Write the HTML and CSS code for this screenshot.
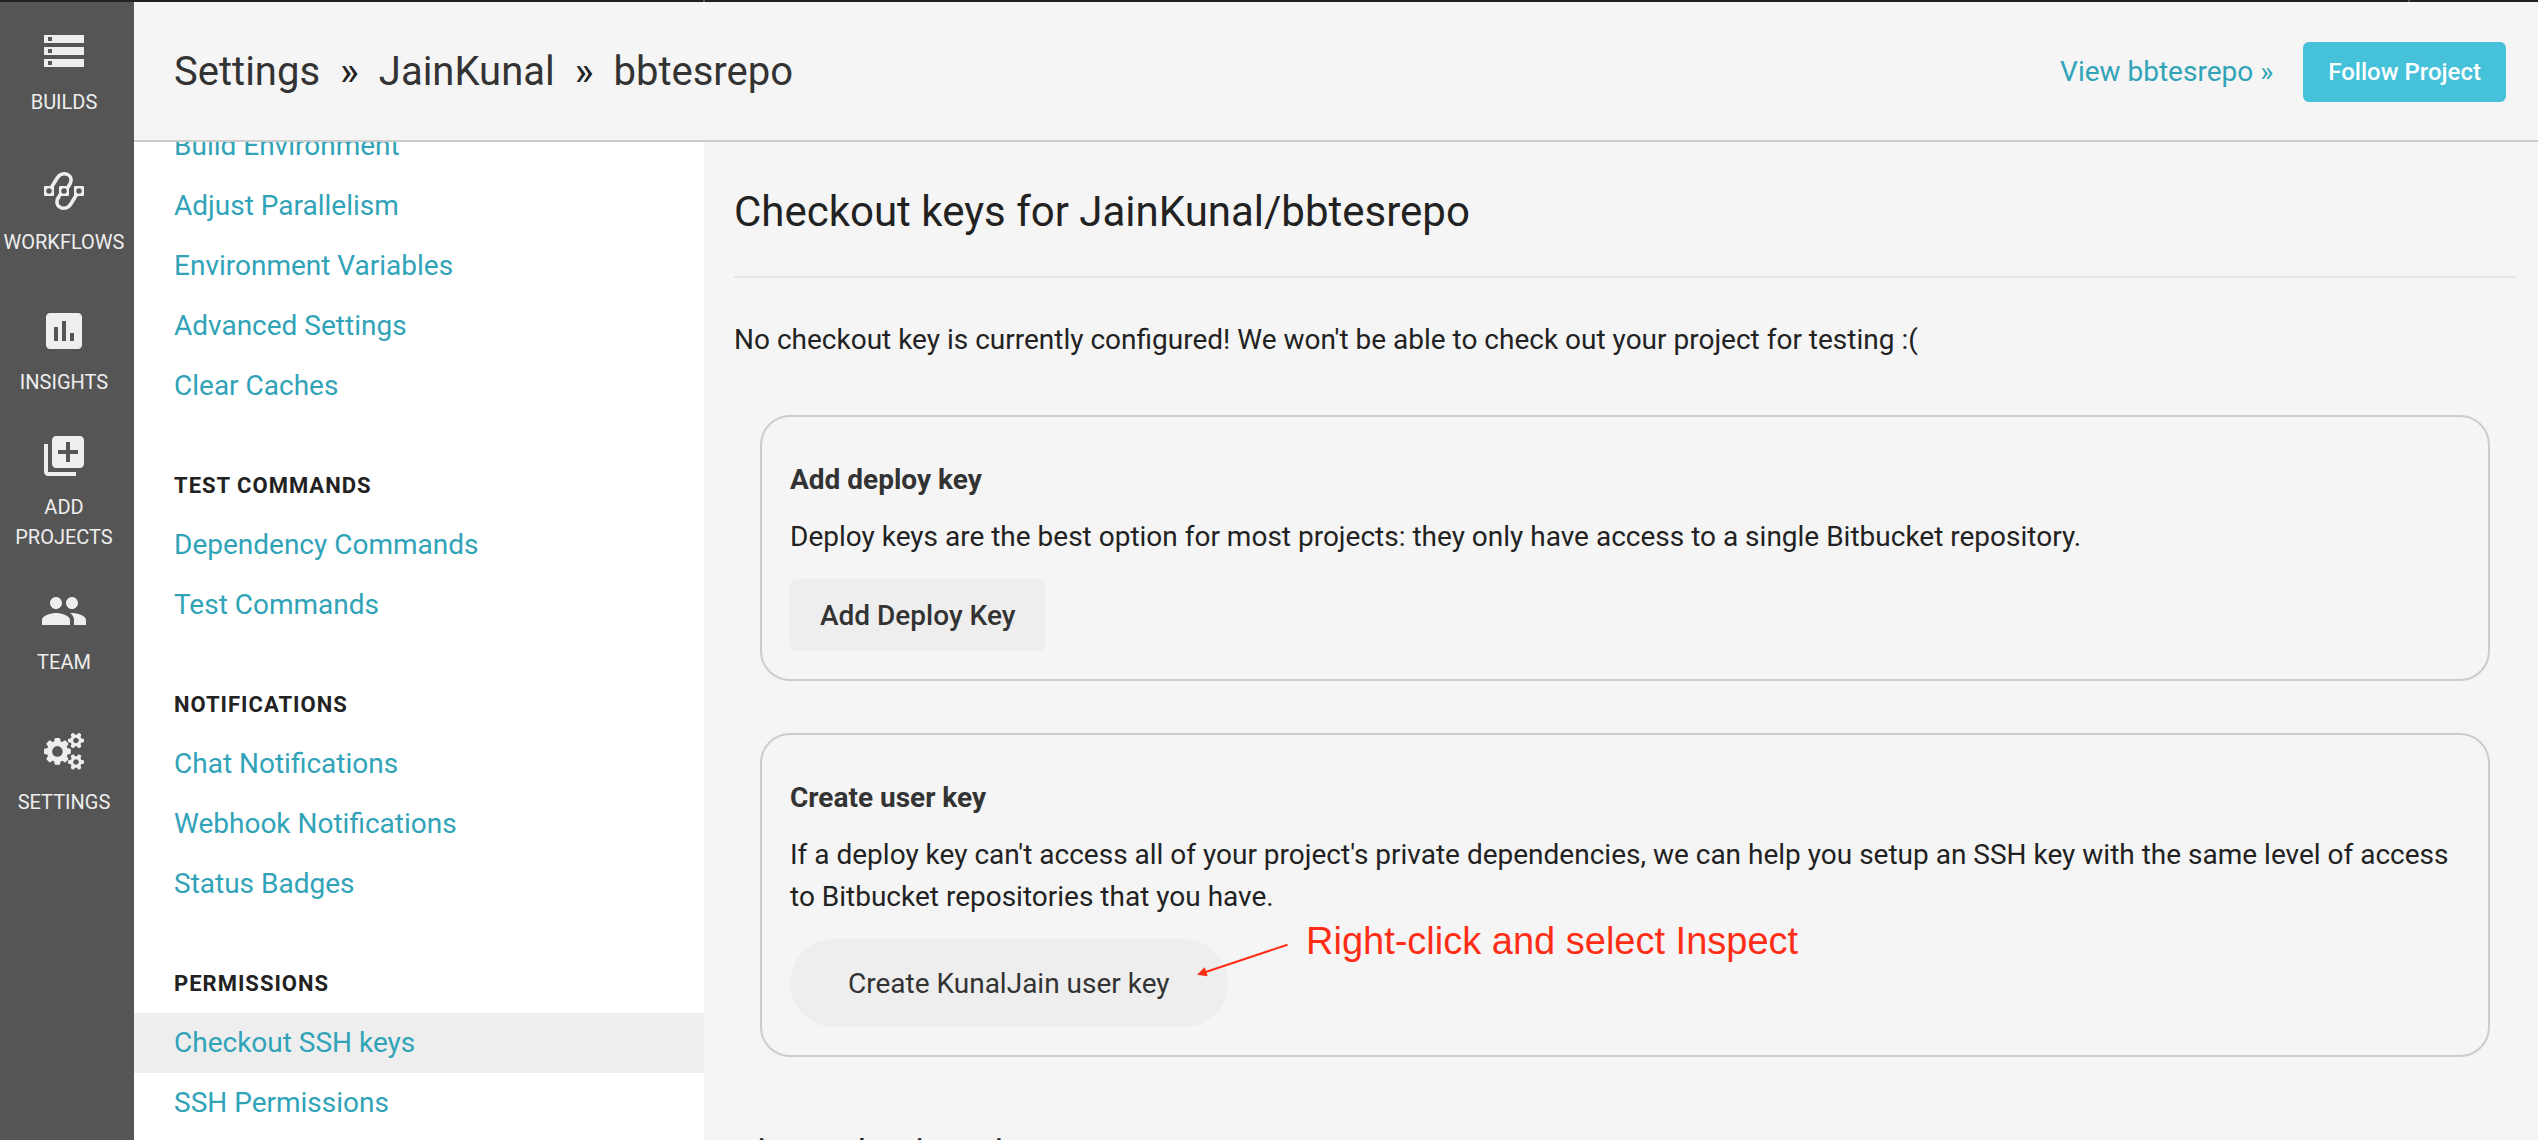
FILE: index.html
```html
<!DOCTYPE html>
<html lang="en">
<head>
<meta charset="utf-8">
<title>Settings » JainKunal » bbtesrepo</title>
<link rel="stylesheet" href="styles.css">
</head>
<body>
<div class="top-strip"></div>
<div class="app">
  <nav class="rail" aria-label="Main">
    <a class="rail-item" href="#builds">
      <svg class="rail-icon" viewBox="0 0 24 24"><path d="M2 20h20v-4H2v4zm2-3h2v2H4v-2zM2 4v4h20V4H2zm4 3H4V5h2v2zm-4 7h20v-4H2v4zm2-3h2v2H4v-2z"/></svg>
      <span>BUILDS</span>
    </a>
    <a class="rail-item" href="#workflows">
      <svg class="rail-icon" viewBox="0 0 48 48">
        <g fill="none" stroke="#eee" stroke-width="3.600">
          <path d="M11 21 L17.500 10.500 C22 3.500 33 7 30.800 15 C30.300 17.500 28.500 18 28 21"/>
          <path d="M37 27 L30.500 37.500 C26 44.500 15 41 17.200 33 C17.700 30.500 19.500 30 20 27"/>
        </g>
        <path fill-rule="evenodd" d="M5 19h8q1 0 1 1v8q0 1-1 1H5q-1 0-1-1v-8q0-1 1-1zM9 21.300a2.700 2.700 0 1 0 0 5.400a2.700 2.700 0 1 0 0-5.400zM20 19h8q1 0 1 1v8q0 1-1 1h-8q-1 0-1-1v-8q0-1 1-1zM24 21.300a2.700 2.700 0 1 0 0 5.400a2.700 2.700 0 1 0 0-5.400zM35 19h8q1 0 1 1v8q0 1-1 1h-8q-1 0-1-1v-8q0-1 1-1zM39 21.300a2.700 2.700 0 1 0 0 5.400a2.700 2.700 0 1 0 0-5.400z"/>
      </svg>
      <span>WORKFLOWS</span>
    </a>
    <a class="rail-item" href="#insights">
      <svg class="rail-icon" viewBox="0 0 24 24"><path d="M19 3H5c-1.100 0-2 .9-2 2v14c0 1.100.9 2 2 2h14c1.100 0 2-.9 2-2V5c0-1.100-.9-2-2-2zM9 17H7v-7h2v7zm4 0h-2V7h2v10zm4 0h-2v-4h2v4z"/></svg>
      <span>INSIGHTS</span>
    </a>
    <a class="rail-item" href="#add-projects">
      <svg class="rail-icon" viewBox="0 0 24 24"><path d="M4 6H2v14c0 1.100.9 2 2 2h14v-2H4V6zm16-4H8c-1.100 0-2 .9-2 2v12c0 1.100.9 2 2 2h12c1.100 0 2-.9 2-2V4c0-1.100-.9-2-2-2zm-1 9h-4v4h-2v-4H9V9h4V5h2v4h4v2z"/></svg>
      <span>ADD PROJECTS</span>
    </a>
    <a class="rail-item" href="#team">
      <svg class="rail-icon" viewBox="0 0 24 24"><path d="M16 11c1.660 0 2.990-1.340 2.990-3S17.660 5 16 5c-1.660 0-3 1.340-3 3s1.340 3 3 3zm-8 0c1.660 0 2.990-1.340 2.990-3S9.660 5 8 5C6.340 5 5 6.340 5 8s1.340 3 3 3zm0 2c-2.330 0-7 1.170-7 3.500V19h14v-2.500c0-2.330-4.670-3.500-7-3.500zm8 0c-.29 0-.62.02-.97.05 1.160.84 1.970 1.970 1.970 3.450V19h6v-2.500c0-2.330-4.670-3.500-7-3.500z"/></svg>
      <span>TEAM</span>
    </a>
    <a class="rail-item" href="#settings">
      <svg class="rail-icon" viewBox="0 0 48 48">
        <defs>
          <path id="tooth" d="M-3.400-9.500 L-2.600-12.800 Q-2.500-13.400-1.900-13.400 H1.900 Q2.500-13.400 2.600-12.800 L3.400-9.500z"/>
          <g id="cog-small">
            <circle r="4.200" fill="none" stroke="#eee" stroke-width="3"/>
            <g id="pair"><path d="M-2.200-5 L-1.600-8 H1.600 L2.200-5zM-2.200 5 L-1.600 8 H1.600 L2.200 5z"/></g>
            <use href="#pair" transform="rotate(60)"/>
            <use href="#pair" transform="rotate(120)"/>
          </g>
        </defs>
        <g transform="translate(17.400 24.400)">
          <circle r="7.900" fill="none" stroke="#eee" stroke-width="5.200"/>
          <use href="#tooth"/><use href="#tooth" transform="rotate(45)"/><use href="#tooth" transform="rotate(90)"/><use href="#tooth" transform="rotate(135)"/>
          <use href="#tooth" transform="rotate(180)"/><use href="#tooth" transform="rotate(225)"/><use href="#tooth" transform="rotate(270)"/><use href="#tooth" transform="rotate(315)"/>
        </g>
        <use href="#cog-small" transform="translate(36 13.500) rotate(30)"/>
        <use href="#cog-small" transform="translate(36 35) rotate(30)"/>
      </svg>
      <span>SETTINGS</span>
    </a>
  </nav>
  <div class="page">
    <header class="page-header">
      <nav class="crumbs" aria-label="Breadcrumb">
        <a href="#settings">Settings</a><span>»</span><a href="#org">JainKunal</a><span>»</span><a href="#repo">bbtesrepo</a>
      </nav>
      <div class="header-actions">
        <a class="link" href="#view">View bbtesrepo »</a>
        <button class="button-primary" type="button">Follow Project</button>
      </div>
    </header>
    <div class="columns">
      <aside class="side-menu">
        <ul class="menu-list menu-scrolled">
          <li><a href="#build-environment">Build Environment</a></li>
          <li><a href="#parallelism">Adjust Parallelism</a></li>
          <li><a href="#variables">Environment Variables</a></li>
          <li><a href="#advanced">Advanced Settings</a></li>
          <li><a href="#caches">Clear Caches</a></li>
        </ul>
        <h2 class="menu-title">TEST COMMANDS</h2>
        <ul class="menu-list">
          <li><a href="#dependency">Dependency Commands</a></li>
          <li><a href="#test">Test Commands</a></li>
        </ul>
        <h2 class="menu-title">NOTIFICATIONS</h2>
        <ul class="menu-list">
          <li><a href="#chat">Chat Notifications</a></li>
          <li><a href="#webhook">Webhook Notifications</a></li>
          <li><a href="#badges">Status Badges</a></li>
        </ul>
        <h2 class="menu-title">PERMISSIONS</h2>
        <ul class="menu-list">
          <li><a class="active" href="#checkout">Checkout SSH keys</a></li>
          <li><a href="#ssh">SSH Permissions</a></li>
        </ul>
      </aside>
      <main class="content">
        <h1 class="section-title">Checkout keys for JainKunal/bbtesrepo</h1>
        <p class="notice">No checkout key is currently configured! We won't be able to check out your project for testing :(</p>
        <section class="card">
          <h2 class="card-title">Add deploy key</h2>
          <p class="card-text">Deploy keys are the best option for most projects: they only have access to a single Bitbucket repository.</p>
          <button class="button" type="button">Add Deploy Key</button>
        </section>
        <section class="card">
          <h2 class="card-title">Create user key</h2>
          <p class="card-text">If a deploy key can't access all of your project's private dependencies, we can help you setup an SSH key with the same level of access to Bitbucket repositories that you have.</p>
          <div class="button-wrap">
            <button class="button button-pill" type="button">Create KunalJain user key</button>
            <div class="callout">
              <svg class="callout-arrow" width="96" height="40" viewBox="0 0 96 40"><path d="M91.500 3.700 L9 31.300" fill="none" stroke="#ff2d16" stroke-width="2"/><path d="M1 33.700 L8.700 26.300 L11.700 35.300z" fill="#ff2d16"/></svg>
              <span>Right-click and select Inspect</span>
            </div>
          </div>
        </section>
        <h2 class="about-title">About checkout keys</h2>
      </main>
    </div>
  </div>
</div>
</body>
</html>
```
FILE: styles.css
```css
* {
  box-sizing: border-box;
}

body {
  display: flex;
  flex-direction: column;
  height: 100vh;
  margin: 0;
  overflow: hidden;
  background: #f5f5f5;
  color: #222;
  font: 28px/42px Roboto, "Liberation Sans", sans-serif;
}

h1, h2, p, ul {
  margin: 0;
  padding: 0;
}

a {
  color: #31a3b8;
  text-decoration: none;
}

button {
  border: 0;
  font-family: inherit;
}

.top-strip {
  flex: none;
  height: 2px;
  background:
    linear-gradient(#555, #555) 703px 0 / 2px 2px no-repeat,
    linear-gradient(#555, #555) right 128px top 0 / 2px 2px no-repeat,
    #231f20;
}

.app {
  display: flex;
  flex: 1;
  min-height: 0;
}

/* Left icon rail */
.rail {
  flex: none;
  width: 134px;
  padding-right: 6px;
  background: #555;
}

.rail-item {
  display: flex;
  flex-direction: column;
  align-items: center;
  justify-content: center;
  gap: 12px;
  height: 140px;
  color: #eee;
  font-size: 20px;
  line-height: 30px;
  text-align: center;
}

.rail-icon {
  width: 48px;
  height: 48px;
  fill: #eee;
}

/* Header */
.page {
  display: flex;
  flex: 1;
  flex-direction: column;
  min-width: 0;
}

.page-header {
  display: flex;
  flex: none;
  align-items: center;
  justify-content: space-between;
  height: 140px;
  padding: 2px 32px 0 40px;
  border-bottom: 2px solid #ccc;
}

.crumbs {
  display: flex;
  gap: 20px;
  font-size: 40px;
  line-height: 60px;
}

.crumbs a {
  color: #333;
}

.header-actions {
  display: flex;
  align-items: center;
  gap: 30px;
}

.button-primary {
  height: 60px;
  padding: 0 25px;
  border-radius: 6px;
  background: #45c1da;
  color: #fff;
  font-size: 24px;
  font-weight: 500;
}

.columns {
  display: flex;
  flex: 1;
  min-height: 0;
}

/* Settings menu */
.side-menu {
  flex: none;
  width: 570px;
  overflow: hidden;
  background: #fff;
}

.menu-list {
  list-style: none;
}

.menu-scrolled {
  margin-top: -26px;
}

.menu-list a {
  display: block;
  padding: 0 40px;
  line-height: 60px;
}

.menu-list .active {
  background: #eee;
}

.menu-title {
  padding: 55px 40px 14px;
  font-size: 22px;
  line-height: 30px;
  letter-spacing: 1px;
}

/* Content */
.content {
  flex: 1;
  min-width: 0;
  padding: 0 22px 0 30px;
  overflow: hidden;
}

.section-title {
  padding: 38px 0 32px;
  border-bottom: 2px solid #e5e5e5;
  font-size: 42px;
  font-weight: 400;
  line-height: 64px;
}

.notice {
  padding: 41px 0 12px;
}

.card {
  margin: 42px 26px 52px;
  padding: 42px 28px 28px;
  border: 2px solid #ccc;
  border-radius: 30px;
}

.card-title {
  color: #333;
  font-size: 28px;
  line-height: 42px;
}

.card-text {
  padding: 15px 0 21px;
}

.button {
  display: block;
  height: 72px;
  padding: 0 30px;
  border-radius: 6px;
  background: #eee;
  color: #333;
  font-size: 28px;
  font-weight: 500;
}

.button-pill {
  height: 88px;
  padding: 0 58px;
  border-radius: 44px;
  font-weight: 400;
}

.button-wrap {
  position: relative;
  width: max-content;
}

/* Note laid over the card, pointing at the button */
.callout {
  position: absolute;
  top: -20px;
  left: 406px;
  display: flex;
  color: #ff2d16;
  font: 38px/44px "Liberation Sans", sans-serif;
  white-space: nowrap;
}

.callout-arrow {
  margin-top: 22px;
  margin-right: 14px;
}

.about-title {
  padding-top: 18px;
  font-size: 36px;
  font-weight: 400;
  line-height: 54px;
}
```
